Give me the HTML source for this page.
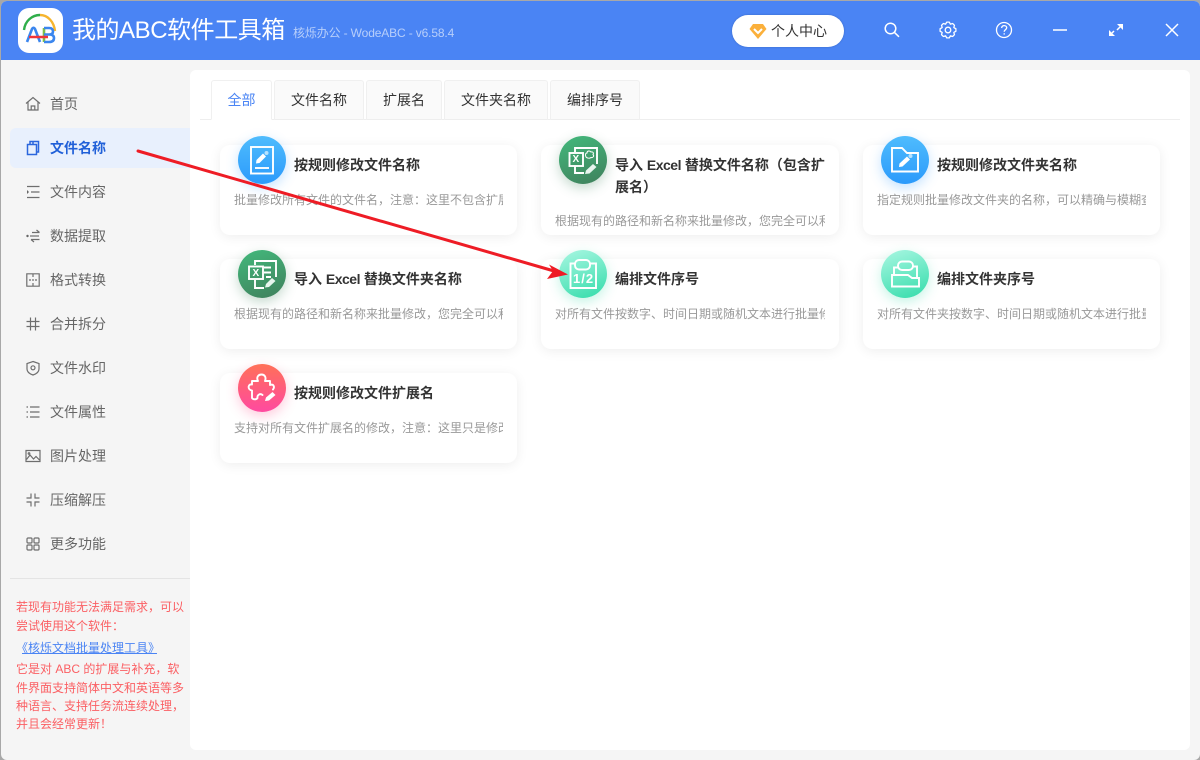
<!DOCTYPE html>
<html lang="zh">
<head>
<meta charset="utf-8">
<title>我的ABC软件工具箱</title>
<style>
*{box-sizing:border-box;margin:0;padding:0}
html,body{width:1200px;height:760px;overflow:hidden;background:#a8a8a8}
body{font-family:"Liberation Sans","Noto Sans CJK SC",sans-serif;position:relative}
.abs{position:absolute}
#win{position:absolute;left:1px;top:1px;width:1199px;height:759px;background:#f5f5f5;border-radius:6px;overflow:hidden}
#hd{position:absolute;left:0;top:0;width:1199px;height:59px;background:#4a84f4}
.t{position:absolute;white-space:nowrap}
.nav{position:absolute;left:50px;font-size:14px;line-height:20px;color:#666;white-space:nowrap}
.ni{position:absolute;left:25px;width:16px;height:16px;fill:none;stroke:#6e6e6e;stroke-width:1.2}
.tab{position:absolute;top:80px;height:40px;background:#fafafa;border:1px solid #f0f0f0;border-bottom:1px solid #eee;border-radius:3px 3px 0 0;font-size:14px;line-height:39px;text-align:center;color:#333}
.card{position:absolute;width:298px;height:90px;background:#fff;border-radius:10px;box-shadow:0 2px 12px rgba(0,0,0,.07)}
.ic{position:absolute;width:48px;height:48px;border-radius:50%}
.ic svg{position:absolute;left:0;top:0;width:48px;height:48px;fill:none;stroke:#fff;stroke-width:1.9}
.blue{background:linear-gradient(180deg,#4fbcfd,#2b9afb);box-shadow:0 4px 12px rgba(60,160,255,.3)}
.green{background:linear-gradient(160deg,#42b97c,#40805c);box-shadow:0 4px 12px rgba(60,130,90,.3)}
.mint{background:linear-gradient(160deg,#a9f7e2,#33dcaa);box-shadow:0 4px 12px rgba(60,220,170,.3)}
.pink{background:linear-gradient(180deg,#ff7058,#ff4aa0);box-shadow:0 4px 12px rgba(255,80,140,.3)}
.ct{position:absolute;font-size:14px;font-weight:bold;color:#333;line-height:22px;white-space:nowrap}
.ct span{letter-spacing:-.5px}
.cd{position:absolute;font-size:12px;color:#999;line-height:18px;width:269px;height:18px;overflow:hidden;white-space:nowrap}
.red{position:absolute;left:16px;font-size:12px;line-height:18px;color:#fb5f63;white-space:nowrap}
</style>
</head>
<body>
<div id="win"></div>
<div id="hd" class="abs" style="left:1px;top:1px;border-radius:6px 6px 0 0"></div>

<!-- logo -->
<div class="abs" style="left:18px;top:8px;width:45px;height:45px;background:#fff;border-radius:11px"></div>
<svg class="abs" style="left:18px;top:8px" width="45" height="45" viewBox="0 0 45 45" fill="none">
<path d="M6 22C7 13 14 7 22 7" stroke="#2fae4a" stroke-width="2.400"/>
<path d="M22 7C30 7 36 14 37 23" stroke="#f6b52e" stroke-width="2.400"/>
<path d="M9 34L14 21Q15.500 18.500 17 21L22 34" stroke="#3b86ee" stroke-width="2.600"/>
<path d="M26 20V34" stroke="#7cc04a" stroke-width="2.600"/>
<path d="M26 20H31Q35 20 35 23.500Q35 26.500 31 26.500H26M31 26.500Q36 26.500 36 30Q36 34 31 34H26" stroke="#3b86ee" stroke-width="2.600"/>
<path d="M11 29H30" stroke="#f0353a" stroke-width="2.600"/>
</svg>
<div class="t" style="left:72px;top:14px;font-size:24px;line-height:34px;color:#fff;letter-spacing:-.45px">我的ABC软件工具箱</div>
<div class="t" style="left:293px;top:24px;font-size:12px;line-height:18px;color:rgba(255,255,255,.6);letter-spacing:-.14px">核烁办公 - WodeABC - v6.58.4</div>

<!-- pill -->
<div class="abs" style="left:732px;top:15px;width:112px;height:32px;background:#fff;border-radius:16px;box-shadow:0 0 2px rgba(0,0,0,.2)"></div>
<svg class="abs" style="left:749px;top:23px" width="18" height="17" viewBox="0 0 18 17"><path d="M4 1H14L17.500 6L9 16L.5 6Z" fill="#fbb03b"/><path d="M5 6L9 10L13 6" fill="none" stroke="#fff" stroke-width="2"/></svg>
<div class="t" style="left:771px;top:21px;font-size:14px;line-height:20px;color:#333">个人中心</div>

<!-- window icons -->
<svg class="abs" style="left:880px;top:19px" width="304" height="24" viewBox="0 0 304 24" fill="none" stroke="#fff" stroke-width="1.500">
<circle cx="10.500" cy="9.500" r="5.300"/><path d="M14.300 13.300L19 17.800"/>
<path transform="translate(68 11)" stroke-linejoin="round" stroke-width="1.300" d="M7.900 1.250L5.820 2.410L6.470 4.700L4.700 6.470L2.410 5.820L1.250 7.900H-1.250L-2.410 5.820L-4.700 6.470L-6.470 4.700L-5.820 2.410L-7.900 1.250V-1.250L-5.820 -2.410L-6.470 -4.700L-4.700 -6.470L-2.410 -5.820L-1.250 -7.900H1.250L2.410 -5.820L4.700 -6.470L6.470 -4.700L5.820 -2.410L7.900 -1.250Z"/>
<circle cx="68" cy="11" r="2.800" stroke-width="1.300"/>
<circle cx="124" cy="11" r="7.500" stroke-width="1.300"/><path d="M121.600 9C121.800 7.400 122.900 6.600 124.200 6.600C125.700 6.600 126.700 7.600 126.700 8.800C126.700 10.600 124.200 10.800 124.200 12.800" stroke-width="1.300"/><path d="M124.200 14.200V15.600" stroke-width="1.300"/>
<path d="M173 11H187" stroke="#e4ecfd" stroke-width="1.800"/>
<path d="M237 5H243V11ZM229 17V11L235 17Z" fill="#fff" stroke="none"/>
<path d="M240 8L237 11M232 14L234 12" stroke-width="1.500"/>
<path d="M286 5L298 17M298 5L286 17"/>
</svg>

<!-- sidebar -->
<div class="abs" style="left:10px;top:128px;width:180px;height:40px;background:#e8f0fd;border-radius:6px 0 0 6px"></div>

<svg class="ni" style="top:96px" viewBox="0 0 16 16"><path d="M1 7.500L8 1.500L15 7.500M3 6V14H13V6M6.200 14V10H9.800V14"/></svg>
<div class="nav" style="top:94px">首页</div>

<svg class="ni" style="top:140px;left:26px;stroke:#2b66dd;stroke-width:1.500" viewBox="0 0 16 16"><path d="M1.500 4.500H10.500V14.500H1.500ZM4 4.500V1.500H12.500V12H10.500M7 1.500V4.500"/></svg>
<div class="nav" style="top:138px;color:#2060d8;font-weight:bold">文件名称</div>

<svg class="ni" style="top:184px" viewBox="0 0 16 16"><path d="M2 2.500H14.500M6 8H14.500M2 13.500H14.500"/><path d="M2 6L4 8L2 10Z" fill="#666" stroke="none"/></svg>
<div class="nav" style="top:182px">文件内容</div>

<svg class="ni" style="top:228px" viewBox="0 0 16 16"><path d="M7 4.500H14.500M11.500 2L14.500 4.500M6 11.500H14.500M6 11.500L9 14"/><circle cx="2.500" cy="8" r="1.200" fill="#666" stroke="none"/><path d="M5 8H14"/></svg>
<div class="nav" style="top:226px">数据提取</div>

<svg class="ni" style="top:272px" viewBox="0 0 16 16"><path d="M1.800 1.800H14.200V14.200H1.800ZM8 1.800V5M8 7V9M8 11V14.200M4 8H6M10 8H12"/></svg>
<div class="nav" style="top:270px">格式转换</div>

<svg class="ni" style="top:316px" viewBox="0 0 16 16"><path d="M5.500 1.500V14.500M10.500 1.500V14.500M1.500 5.500H14.500M1.500 10.500H14.500"/></svg>
<div class="nav" style="top:314px">合并拆分</div>

<svg class="ni" style="top:360px" viewBox="0 0 16 16"><path d="M8 1.500L14 3.500V9C14 12 11 14 8 15C5 14 2 12 2 9V3.500Z"/><circle cx="8" cy="7.800" r="2"/></svg>
<div class="nav" style="top:358px">文件水印</div>

<svg class="ni" style="top:404px" viewBox="0 0 16 16"><path d="M5 3H14.500M5 8H14.500M5 13H14.500M1.500 3H3M1.500 8H3M1.500 13H3"/></svg>
<div class="nav" style="top:402px">文件属性</div>

<svg class="ni" style="top:448px" viewBox="0 0 16 16"><path d="M1 2.500H15V13.500H1ZM1.500 11.500L5 7L8.500 11L11 8.500L14.500 12"/><circle cx="4" cy="5.500" r=".8"/></svg>
<div class="nav" style="top:446px">图片处理</div>

<svg class="ni" style="top:492px" viewBox="0 0 16 16"><path d="M6 1.500V6H1.500M10 1.500V6H14.500M6 14.500V10H1.500M10 14.500V10H14.500"/></svg>
<div class="nav" style="top:490px">压缩解压</div>

<svg class="ni" style="top:536px" viewBox="0 0 16 16"><rect x="2" y="2" width="5" height="5" rx="1"/><rect x="9" y="2" width="5" height="5" rx="1"/><rect x="2" y="9" width="5" height="5" rx="1"/><rect x="9" y="9" width="5" height="5" rx="1"/></svg>
<div class="nav" style="top:534px">更多功能</div>

<div class="abs" style="left:10px;top:578px;width:180px;height:1px;background:#e4e4e4"></div>
<div class="red" style="top:598px">若现有功能无法满足需求，可以</div>
<div class="red" style="top:617px">尝试使用这个软件：</div>
<div class="red" style="top:639px;color:#4a84f4">《核烁文档批量处理工具》</div>
<div class="abs" style="left:22px;top:653px;width:135px;height:1px;background:#4a84f4"></div>
<div class="red" style="top:660px">它是对 ABC 的扩展与补充，软</div>
<div class="red" style="top:679px">件界面支持简体中文和英语等多</div>
<div class="red" style="top:697px">种语言、支持任务流连续处理，</div>
<div class="red" style="top:715px">并且会经常更新！</div>

<!-- content -->
<div class="abs" style="left:190px;top:70px;width:1000px;height:680px;background:#fff;border-radius:6px"></div>
<div class="abs" style="left:200px;top:119px;width:980px;height:1px;background:#eee"></div>
<div class="tab" style="left:211px;width:61px;background:#fff;border-bottom-color:#fff;color:#4a84f4">全部</div>
<div class="tab" style="left:274px;width:90px">文件名称</div>
<div class="tab" style="left:366px;width:76px">扩展名</div>
<div class="tab" style="left:444px;width:104px">文件夹名称</div>
<div class="tab" style="left:550px;width:90px">编排序号</div>

<!-- cards -->
<div class="card" style="left:220px;top:145px;width:297px"></div>
<div class="card" style="left:541px;top:145px"></div>
<div class="card" style="left:863px;top:145px;width:297px"></div>
<div class="card" style="left:220px;top:259px;width:297px"></div>
<div class="card" style="left:541px;top:259px"></div>
<div class="card" style="left:863px;top:259px;width:297px"></div>
<div class="card" style="left:220px;top:373px;width:297px"></div>

<!-- card 1 -->
<div class="ic blue" style="left:238px;top:136px"><svg viewBox="0 0 48 48"><rect x="13" y="11" width="22" height="26.500"/><path d="M17 32H31"/><path d="M18 27.500L18.500 24L25 17.500L28 20.500L21.500 27Z" fill="#fff" stroke="none"/><circle cx="28.500" cy="17" r="2" fill="#b5e2ff" stroke="none"/></svg></div>
<div class="ct" style="left:294px;top:154px">按规则修改文件名称</div>
<div class="cd" style="left:234px;top:191px">批量修改所有文件的文件名，注意：这里不包含扩展名</div>

<!-- card 2 -->
<div class="ic green" style="left:559px;top:136px"><svg viewBox="0 0 48 48"><path d="M16 16V12H38V28M25 37H16V30"/><rect x="10.500" y="17" width="13.500" height="13"/><path d="M27 21C26 19 26.500 17 28 17C28 14.500 31 14.500 32 16C34 15.500 35 17 34 18.500C35.500 20 34 22 32 21.500C31 22.500 28.500 22.500 27 21Z" stroke-width="1"/><path d="M26 38L27 34.500L34 28L37.500 31L30.500 37.500Z" fill="#e8f5ee" stroke="none"/></svg><div class="t" style="left:13.500px;top:17px;font-size:10px;font-weight:bold;color:#fff;line-height:13px">X</div></div>
<div class="ct" style="left:615px;top:154px">导入 <span>Excel</span> 替换文件名称（包含扩</div>
<div class="ct" style="left:615px;top:176px">展名）</div>
<div class="cd" style="left:555px;top:212px;width:270px">根据现有的路径和新名称来批量修改，您完全可以利用</div>

<!-- card 3 -->
<div class="ic blue" style="left:881px;top:136px"><svg viewBox="0 0 48 48"><path d="M11 12H21L26 17H37V35.500H11Z"/><path d="M18 31L18.500 27.500L26 20.500L29 23.500L21.500 30.500Z" fill="#fff" stroke="none"/><circle cx="29.500" cy="20" r="2" fill="#b5e2ff" stroke="none"/></svg></div>
<div class="ct" style="left:937px;top:154px">按规则修改文件夹名称</div>
<div class="cd" style="left:877px;top:191px">指定规则批量修改文件夹的名称，可以精确与模糊查找</div>

<!-- card 4 -->
<div class="ic green" style="left:238px;top:250px"><svg viewBox="0 0 48 48"><path d="M17 15V11H38V27M26 38H17V30M26 17.500H33M26 22.500H33M28 27H33"/><rect x="11" y="16.500" width="14" height="12.500"/><path d="M27 37.500L28 34L34 28L37.500 31L31 37Z" fill="#e8f5ee" stroke="none"/></svg><div class="t" style="left:14.500px;top:16.500px;font-size:10px;font-weight:bold;color:#fff;line-height:13px">X</div></div>
<div class="ct" style="left:294px;top:268px">导入 <span>Excel</span> 替换文件夹名称</div>
<div class="cd" style="left:234px;top:305px">根据现有的路径和新名称来批量修改，您完全可以利用</div>

<!-- card 5 -->
<div class="ic mint" style="left:559px;top:250px"><svg viewBox="0 0 48 48"><path d="M16 13.500H11.500V38H37V13.500H31"/><rect x="16" y="10" width="15" height="9.500" rx="4"/></svg><div class="t" style="left:14px;top:21.500px;font-size:13px;font-weight:bold;color:#fff;line-height:14px;letter-spacing:1px">1/2</div></div>
<div class="ct" style="left:615px;top:268px">编排文件序号</div>
<div class="cd" style="left:555px;top:305px;width:270px">对所有文件按数字、时间日期或随机文本进行批量修改</div>

<!-- card 6 -->
<div class="ic mint" style="left:881px;top:250px"><svg viewBox="0 0 48 48"><path d="M13 25V17.500H17M31.500 16.500H36V28M11 25H27L31 28H38V36.500H11Z"/><rect x="17" y="11.500" width="15" height="8.500" rx="4"/></svg></div>
<div class="ct" style="left:937px;top:268px">编排文件夹序号</div>
<div class="cd" style="left:877px;top:305px">对所有文件夹按数字、时间日期或随机文本进行批量修改</div>

<!-- card 7 -->
<div class="ic pink" style="left:238px;top:364px"><svg viewBox="0 0 48 48" stroke-width="2.200"><path stroke-linejoin="round" stroke-linecap="round" d="M14 17H20C18 13 20.500 10.500 23.500 10.500C26.500 10.500 28.500 13 27 17H32V21C35.500 19.500 37 23 35 25.500M14 17V20.500C10 19.500 9 25.500 14 26.500V34C15 35.500 18 36 19.500 34C19 31 22 29 24.500 31"/><path d="M27 37L28 33.500L34.500 28L37.500 31L31 36.500Z" fill="#fff" stroke="none"/></svg></div>
<div class="ct" style="left:294px;top:382px">按规则修改文件扩展名</div>
<div class="cd" style="left:234px;top:419px">支持对所有文件扩展名的修改，注意：这里只是修改扩展名</div>

<!-- arrow -->
<svg class="abs" style="left:0;top:0" width="1200" height="760" viewBox="0 0 1200 760" fill="none">
<path d="M138 151L554 271" stroke="#ee1c25" stroke-width="3" stroke-linecap="round"/>
<path d="M568 274.500L549 264.500L553 271L547 279Z" fill="#ee1c25"/>
</svg>
</body>
</html>
